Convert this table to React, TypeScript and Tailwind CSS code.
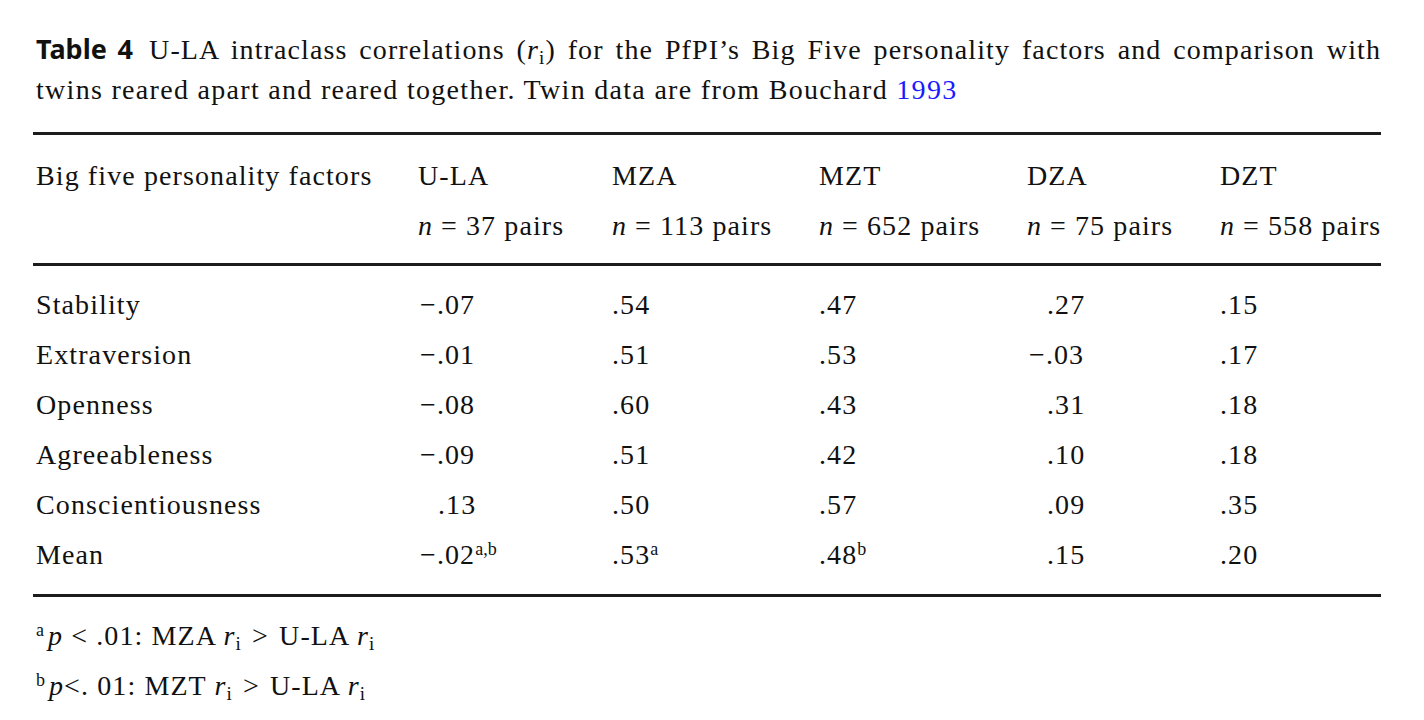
const serif = "font-['Liberation_Serif','Times_New_Roman',serif]"

const columns = [
  { name: 'U-LA', n: '37' },
  { name: 'MZA', n: '113' },
  { name: 'MZT', n: '652' },
  { name: 'DZA', n: '75' },
  { name: 'DZT', n: '558' },
]

type Cell = { v: string; sup?: string; pad?: boolean }

const rows: { label: string; cells: Cell[] }[] = [
  {
    label: 'Stability',
    cells: [{ v: '−.07' }, { v: '.54' }, { v: '.47' }, { v: '.27', pad: true }, { v: '.15' }],
  },
  {
    label: 'Extraversion',
    cells: [{ v: '−.01' }, { v: '.51' }, { v: '.53' }, { v: '−.03' }, { v: '.17' }],
  },
  {
    label: 'Openness',
    cells: [{ v: '−.08' }, { v: '.60' }, { v: '.43' }, { v: '.31', pad: true }, { v: '.18' }],
  },
  {
    label: 'Agreeableness',
    cells: [{ v: '−.09' }, { v: '.51' }, { v: '.42' }, { v: '.10', pad: true }, { v: '.18' }],
  },
  {
    label: 'Conscientiousness',
    cells: [{ v: '.13', pad: true }, { v: '.50' }, { v: '.57' }, { v: '.09', pad: true }, { v: '.35' }],
  },
  {
    label: 'Mean',
    cells: [
      { v: '−.02', sup: 'a,b' },
      { v: '.53', sup: 'a' },
      { v: '.48', sup: 'b' },
      { v: '.15', pad: true },
      { v: '.20' },
    ],
  },
]

const grid = 'grid grid-cols-[385px_194px_207px_208px_193px_1fr]'

function Ri() {
  return (
    <span className="whitespace-nowrap">
      <i>r</i>
      <span className="relative top-[5px] text-[19px] leading-none">i</span>
    </span>
  )
}

function Rule() {
  return <div className="h-[3px] bg-[#1c1c1c]" />
}

function Sup({ children }: { children: React.ReactNode }) {
  return (
    <span className="relative -top-[9px] text-[18px] leading-none tracking-normal">{children}</span>
  )
}

export default function App() {
  return (
    <div
      className={`min-h-[720px] bg-white pl-[33px] pr-[43px] pt-[30px] text-[28px] tracking-[1.1px] text-[#111] ${serif}`}
    >
      <div className="pl-[3px] leading-[40px]">
        <p className="text-justify [text-align-last:justify]">
          <span className="mr-[16px] font-['Noto_Sans','Liberation_Sans',sans-serif] text-[27px] leading-none font-bold tracking-normal">
            Table 4
          </span>
          U-LA intraclass correlations (<Ri />) for the PfPI’s Big Five personality factors and comparison with
        </p>
        <p className="tracking-[1.3px]">
          twins reared apart and reared together. Twin data are from Bouchard{' '}
          <span className="text-[#1a1aff]">1993</span>
        </p>
      </div>

      <div className="mt-[22px]">
        <Rule />
        <div className={`${grid} pb-[12px] pt-[16px] leading-[50px]`}>
          <div className="pl-[3px]">Big five personality factors</div>
          {columns.map((c) => (
            <div key={c.name}>{c.name}</div>
          ))}
          <div />
          {columns.map((c) => (
            <div key={c.name} className="whitespace-nowrap">
              <i>n</i>
              <span className="mx-[8px]">=</span>
              {c.n} pairs
            </div>
          ))}
        </div>
        <Rule />
        <div className="pb-[14px] pt-[14px] leading-[50px]">
          {rows.map((r) => (
            <div key={r.label} className={grid}>
              <div className="pl-[3px]">{r.label}</div>
              {r.cells.map((c, i) => (
                <div
                  key={i}
                  className={c.pad ? 'pl-[20px]' : c.v.startsWith('−') ? 'pl-[2px]' : ''}
                >
                  {c.v}
                  {c.sup ? <Sup>{c.sup}</Sup> : null}
                </div>
              ))}
            </div>
          ))}
        </div>
        <Rule />
      </div>

      <div className="pl-[3px] pt-[14px] leading-[50px]">
        <div>
          <span className="mr-[4px]">
            <Sup>a</Sup>
          </span>
          <i>p</i> &lt; .01: MZA <Ri /> <span className="mx-[2px]">&gt;</span> U-LA <Ri />
        </div>
        <div>
          <span className="mr-[4px]">
            <Sup>b</Sup>
          </span>
          <i>p</i>&lt;. 01: MZT <Ri /> <span className="mx-[2px]">&gt;</span> U-LA <Ri />
        </div>
      </div>
    </div>
  )
}
